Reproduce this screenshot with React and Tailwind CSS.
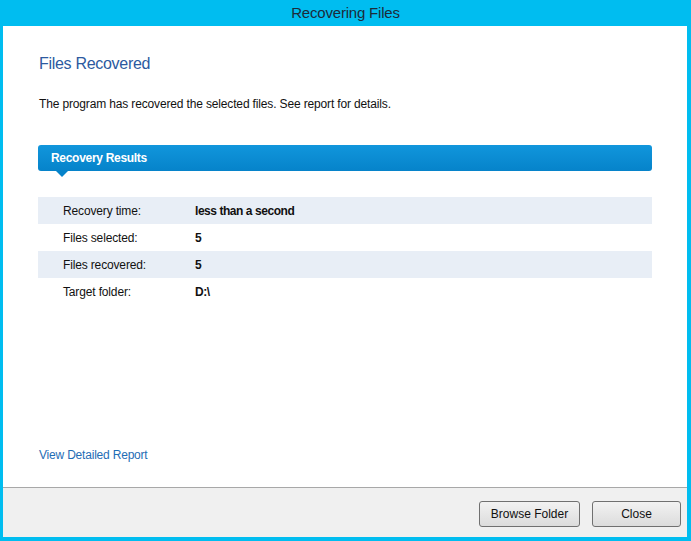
export default function App() {
  const rows = [
    ["Recovery time:", "less than a second", true],
    ["Files selected:", "5", false],
    ["Files recovered:", "5", true],
    ["Target folder:", "D:\\", false],
  ];
  return (
    <div
      className="w-[691px] h-[541px] bg-[#00bdf0] flex flex-col overflow-hidden"
      style={{ fontFamily: '"Liberation Sans", Arial, sans-serif' }}
    >
      <div className="h-[26px] flex items-center justify-center text-[15px] text-[#1d2b3a] tracking-[-0.2px]">
        Recovering Files
      </div>
      <div className="flex-1 ml-[3px] mr-[4px] mb-[4px] bg-white flex flex-col">
        <div className="flex-1 px-[35px] flex flex-col">
          <div className="mt-[27px] pl-[1px] text-[16px] leading-[22px] text-[#2c5aa0] tracking-[-0.3px]">
            Files Recovered
          </div>
          <div className="mt-[21px] pl-[1px] text-[12px] leading-[16px] text-[#111] tracking-[-0.15px]">
            The program has recovered the selected files. See report for details.
          </div>
          <div className="relative mt-[33px] h-[26px] rounded-[3px] bg-gradient-to-b from-[#1196dc] to-[#0683ca] flex items-center pl-[13px] text-[12px] font-bold text-white tracking-[-0.3px]">
            Recovery Results
            <div className="absolute left-[18px] top-[26px] w-0 h-0 border-l-[6px] border-r-[6px] border-t-[6px] border-l-transparent border-r-transparent border-t-[#0683ca]" />
          </div>
          <div className="mt-[26px] flex flex-col text-[12px] text-[#111]">
            {rows.map(([k, v, shaded]) => (
              <div
                key={k}
                className={`h-[27px] flex items-center ${shaded ? "bg-[#e8eef6]" : "bg-white"}`}
              >
                <div className="w-[157px] pl-[25px] tracking-[-0.15px]">{k}</div>
                <div className="font-bold tracking-[-0.45px]">{v}</div>
              </div>
            ))}
          </div>
          <div className="mt-auto mb-[24px] pl-[1px] text-[12px] leading-[16px] text-[#1f6db5] tracking-[-0.2px]">
            View Detailed Report
          </div>
        </div>
        <div className="h-[50px] border-t border-[#a8a8a8] bg-[#f0f0f0] flex items-center justify-end gap-[12px] pr-[6px] pt-[2px]">
          <button className="w-[101px] h-[26px] rounded-[3px] border border-[#707070] bg-gradient-to-b from-[#f2f2f2] to-[#dcdcdc] text-[12px] text-[#111]">
            Browse Folder
          </button>
          <button className="w-[89px] h-[26px] rounded-[3px] border border-[#707070] bg-gradient-to-b from-[#f2f2f2] to-[#dcdcdc] text-[12px] text-[#111]">
            Close
          </button>
        </div>
      </div>
    </div>
  );
}
